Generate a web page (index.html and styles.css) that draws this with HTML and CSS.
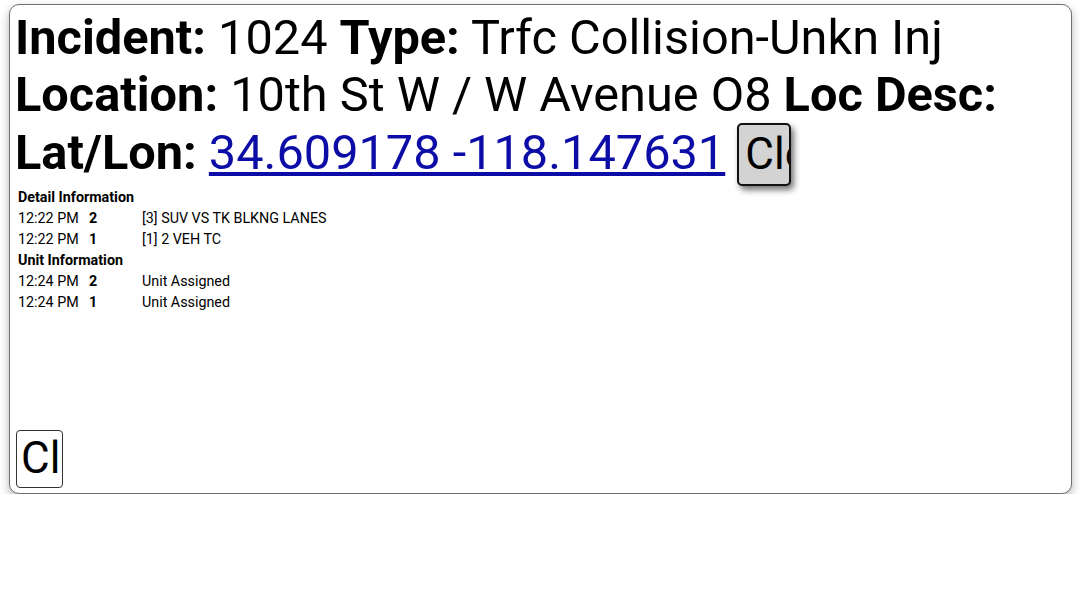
FILE: index.html
```html
<!DOCTYPE html>
<html>
<head>
<meta charset="utf-8">
<link rel="stylesheet" href="styles.css">
</head>
<body>
<div class="panel">
  <div class="head">
    <div class="hline"><b>Incident:</b> 1024 <b>Type:</b> Trfc Collision-Unkn Inj</div>
    <div class="hline"><b>Location:</b> 10th St W / W Avenue O8 <b>Loc Desc:</b></div>
    <div class="hline"><b>Lat/Lon:</b> <a href="#" class="coords">34.609178 -118.147631</a> <button class="btn-top">Close</button></div>
  </div>
  <table class="info">
    <tr><td colspan="3" class="sect">Detail Information</td></tr>
    <tr><td class="c-time">12:22 PM</td><td class="c-unit">2</td><td>[3] SUV VS TK BLKNG LANES</td></tr>
    <tr><td class="c-time">12:22 PM</td><td class="c-unit">1</td><td>[1] 2 VEH TC</td></tr>
    <tr><td colspan="3" class="sect">Unit Information</td></tr>
    <tr><td class="c-time">12:24 PM</td><td class="c-unit">2</td><td>Unit Assigned</td></tr>
    <tr><td class="c-time">12:24 PM</td><td class="c-unit">1</td><td>Unit Assigned</td></tr>
  </table>
  <div class="foot">
    <button class="btn-bottom">Close</button>
  </div>
</div>
</body>
</html>
```

FILE: styles.css
```css
html, body {
  margin: 0;
  padding: 0;
  background: #ffffff;
}

body {
  font-family: Roboto, "Liberation Sans", sans-serif;
  color: #000;
}

.panel {
  margin: 4px 8px 0 9px;
  height: 490px;
  box-sizing: border-box;
  border: 1px solid #6f6f6f;
  border-radius: 10px;
  box-shadow: 0 4px 10px rgba(0, 0, 0, 0.3);
  padding: 4px 4px 5px 5px;
  display: flex;
  flex-direction: column;
  background: #fff;
}

.head {
  font-size: 48.7px;
  line-height: normal;
}

.hline b {
  font-weight: 700;
}

.coords {
  color: #0c0ca6;
  text-decoration: underline;
}

.btn-top {
  display: inline-block;
  box-sizing: border-box;
  width: 54px;
  height: 63px;
  padding: 4px 6px 4px 6px;
  font-family: Roboto, "Liberation Sans", sans-serif;
  font-size: 44px;
  line-height: 51px;
  text-align: left;
  overflow: hidden;
  white-space: nowrap;
  background: #d3d3d3;
  color: #000;
  border: 2px solid #111;
  border-radius: 5px;
  box-shadow: 3px 4px 6px rgba(0, 0, 0, 0.55);
  vertical-align: baseline;
}

.info {
  border-collapse: separate;
  border-spacing: 2px;
  font-size: 14.3px;
  line-height: 17px;
  margin-top: 0;
}

.info td {
  padding: 1px;
  vertical-align: top;
  white-space: nowrap;
}

.info .sect {
  font-weight: 700;
}

.c-time {
  width: 67px;
}

.c-unit {
  width: 49px;
  font-weight: 700;
}

.foot {
  margin-top: auto;
  padding-left: 1px;
}

.btn-bottom {
  display: block;
  box-sizing: border-box;
  width: 47px;
  height: 58px;
  padding: 1px 4px 3px 4px;
  font-family: Roboto, "Liberation Sans", sans-serif;
  font-size: 44px;
  line-height: 52px;
  text-align: left;
  overflow: hidden;
  white-space: nowrap;
  background: #ffffff;
  color: #000;
  border: 1px solid #333;
  border-radius: 4px;
}
```
